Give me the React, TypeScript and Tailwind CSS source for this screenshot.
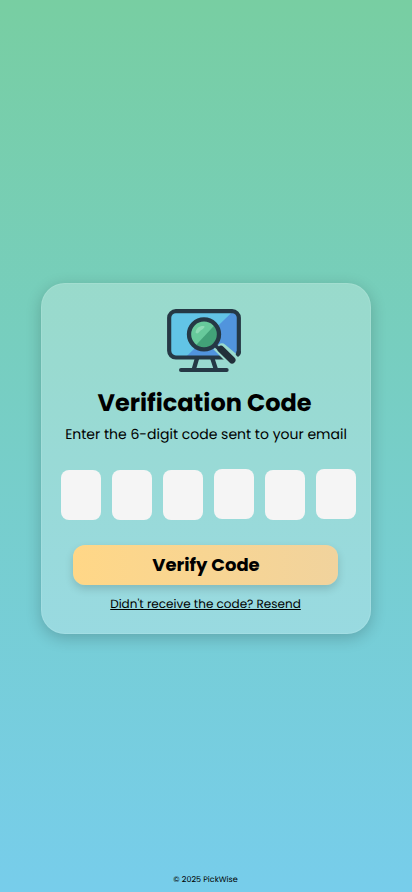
const digits = [0, 0, 0, -1, 0, -1];

function SearchMonitor() {
  return (
    <svg width="100" height="80" viewBox="0 0 300 240" fill="none" className="block shrink-0" aria-hidden="true">
      <defs>
        <clipPath id="screen">
          <rect x="40" y="34" width="209" height="139" rx="16" />
        </clipPath>
        <clipPath id="lens">
          <circle cx="144" cy="103" r="40" />
        </clipPath>
      </defs>
      <g clipPath="url(#screen)">
        <rect x="40" y="34" width="209" height="139" fill="#62c4e6" />
        <path d="M235 30H255V180H80Z" fill="#5194dd" />
      </g>
      <path d="M123 175L114 206M169 175L179 206" stroke="#253845" strokeWidth="13" />
      <path d="M75 210H212" stroke="#253845" strokeWidth="12" strokeLinecap="round" />
      <rect x="39.5" y="33.5" width="209" height="139" rx="20" stroke="#253845" strokeWidth="12.5" />
      <path d="M172 148L188 134Q197 126 208 134L240 161L256 168L244 200L208 184L184 160Z" fill="#9adace" />
      <path d="M242.3 153H254.8V158Q254 166 246 171L239 164Q242 160 242.3 153Z" fill="#253845" />
      <path d="M176 135L194 151" stroke="#253845" strokeWidth="11" />
      <path d="M195 148L228 180" stroke="#222f3a" strokeWidth="21" strokeLinecap="round" />
      <circle cx="144" cy="103" r="44.5" fill="#67c99b" />
      <g clipPath="url(#lens)">
        <path d="M184 67V145H111Z" fill="#42a178" />
        <path d="M119 98C119 84 132 76 145 78C147 86 137 88 132 93C127 99 124 103 119 98Z" fill="#8ddbb5" />
      </g>
      <circle cx="144" cy="103" r="45" stroke="#253845" strokeWidth="13" />
    </svg>
  );
}

export default function App() {
  return (
    <div className="flex min-h-[892px] w-full flex-col items-center bg-linear-to-b from-[#78cea2] to-[#77cdeb] font-[Poppins,Inter,'Open_Sans',sans-serif] text-black [text-rendering:geometricPrecision]">
      <main className="mt-[283px] flex h-[351px] w-[330px] flex-col items-center rounded-[24px] border border-white/10 bg-white/25 pt-4 shadow-[0_4px_16px_rgba(0,0,0,0.2)]">
        <div>
          <SearchMonitor />
        </div>
        <h1 className="mt-[6px] mr-[3px] whitespace-nowrap text-[24px] leading-[36px] font-bold">Verification Code</h1>
        <p className="mt-px whitespace-nowrap text-[14px] leading-[22px]">Enter the 6-digit code sent to your email</p>
        <div className="mt-[25px] ml-[5px] flex gap-[11px]">
          {digits.map((offset, i) => (
            <input
              key={i}
              aria-label={`Digit ${i + 1}`}
              maxLength={1}
              className={`h-[50px] w-10 rounded-[8px] bg-[#f5f5f5] text-center outline-none ${offset ? "-mt-px" : ""}`}
            />
          ))}
        </div>
        <button className="mt-[25px] mr-px h-10 w-[265px] rounded-[12px] bg-linear-to-r from-[#ffd787] to-[#f1d39d] pb-[2px] pl-px text-[18px] font-bold shadow-[0_4px_8px_rgba(0,0,0,0.15)]">
          Verify Code
        </button>
        <a className="mt-[10px] mr-px whitespace-nowrap text-[12px] leading-5 underline">Didn't receive the code? Resend</a>
      </main>
      <footer className="mt-auto mr-px pb-[5px] text-[8px] leading-[14px]">© 2025 PickWise</footer>
    </div>
  );
}
